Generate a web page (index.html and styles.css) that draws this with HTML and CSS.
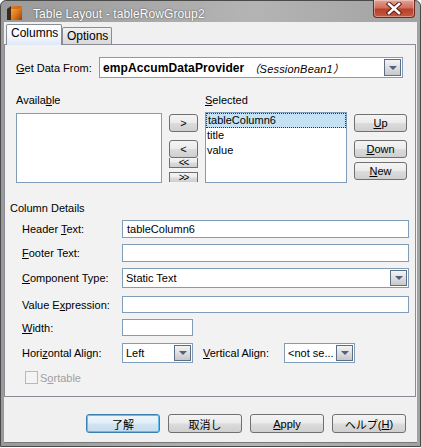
FILE: index.html
```html
<!DOCTYPE html>
<html>
<head>
<meta charset="utf-8">
<link rel="stylesheet" href="styles.css">
</head>
<body>
<div class="window">
  <div class="titlebar">
    <svg class="app-icon" width="16" height="16" viewBox="0 0 16 16">
      <defs>
        <linearGradient id="fr" x1="0" y1="0" x2="1" y2="1">
          <stop offset="0" stop-color="#f7b24a"/>
          <stop offset="0.5" stop-color="#e07a1c"/>
          <stop offset="1" stop-color="#9c3e08"/>
        </linearGradient>
      </defs>
      <polygon points="0,4 4,1 4,15 0,15" fill="#3a2a1c"/>
      <polygon points="4,1 15,1 15,15 4,15" fill="url(#fr)"/>
      <polygon points="4,1 15,1 12,4 4,4" fill="#c25a14" opacity="0.6"/>
    </svg>
    <span class="title">Table Layout - tableRowGroup2</span>
    <div class="close">
      <svg width="18" height="13" viewBox="0 0 18 13">
        <path d="M4 2 L14 11 M14 2 L4 11" stroke="#5a1a10" stroke-width="4.4" stroke-linecap="square"/>
        <path d="M4 2 L14 11 M14 2 L4 11" stroke="#ffffff" stroke-width="2.6" stroke-linecap="square"/>
      </svg>
    </div>
  </div>
  <div class="client">
    <div class="tabs">
      <div class="tab active">Columns</div>
      <div class="tab">Options</div>
    </div>
    <div class="panel">
      <div class="source-row">
        <span class="source-label"><u>G</u>et Data From:</span>
        <div class="combo source-combo">
          <div class="combo-text"><b class="provider">empAccumDataProvider</b><i class="bean">（SessionBean1）</i></div>
          <div class="drop"><span class="tri"></span></div>
        </div>
      </div>

      <div class="lists">
        <div class="cap">Availa<u>b</u>le</div>
        <div></div>
        <div class="cap"><u>S</u>elected</div>
        <div></div>
        <div class="listbox"></div>
        <div class="move-btns">
          <div class="btn btn-add">&gt;</div>
          <div class="btn btn-remove">&lt;</div>
          <div class="btn btn-small btn-remove-all">&lt;&lt;</div>
          <div class="btn btn-small btn-add-all">&gt;&gt;</div>
        </div>
        <div class="listbox selected-list">
          <div class="item sel">tableColumn6</div>
          <div class="item">title</div>
          <div class="item">value</div>
        </div>
        <div class="order-btns">
          <div class="btn btn-up"><u>U</u>p</div>
          <div class="btn btn-down"><u>D</u>own</div>
          <div class="btn btn-new"><u>N</u>ew</div>
        </div>
      </div>

      <div class="section-title">Column Details</div>

      <div class="form-row r-header">
        <span class="flabel">Header <u>T</u>ext:</span>
        <div class="input wide">tableColumn6</div>
      </div>
      <div class="form-row r-footer">
        <span class="flabel"><u>F</u>ooter Text:</span>
        <div class="input wide"></div>
      </div>
      <div class="form-row r-comp">
        <span class="flabel"><u>C</u>omponent Type:</span>
        <div class="combo comp-combo">
          <div class="combo-text">Static Text</div>
          <div class="drop"><span class="tri"></span></div>
        </div>
      </div>
      <div class="form-row r-value">
        <span class="flabel">Value E<u>x</u>pression:</span>
        <div class="input wide"></div>
      </div>
      <div class="form-row r-width">
        <span class="flabel"><u>W</u>idth:</span>
        <div class="input narrow"></div>
      </div>
      <div class="form-row r-align">
        <span class="flabel">Hori<u>z</u>ontal Align:</span>
        <div class="combo small-combo">
          <div class="combo-text">Left</div>
          <div class="drop"><span class="tri"></span></div>
        </div>
        <span class="vlabel"><u>V</u>ertical Align:</span>
        <div class="combo small-combo">
          <div class="combo-text">&lt;not se...</div>
          <div class="drop"><span class="tri"></span></div>
        </div>
      </div>
      <div class="form-row r-sort">
        <span class="checkbox"></span>
        <span class="sort-label">S<u>o</u>rtable</span>
      </div>
    </div>

    <div class="footer">
      <div class="btn dlg-btn default">了解</div>
      <div class="btn dlg-btn">取消し</div>
      <div class="btn dlg-btn"><u>A</u>pply</div>
      <div class="btn dlg-btn">ヘルプ(<u>H</u>)</div>
    </div>
  </div>
</div>
</body>
</html>
```

FILE: styles.css
```css
* { box-sizing: border-box; }

html, body {
  margin: 0;
  padding: 0;
  background: #ffffff;
}

body {
  font-family: "Liberation Sans", "Noto Sans CJK JP", sans-serif;
  font-size: 11px;
  color: #000;
}

u { text-decoration: underline; text-underline-offset: 1px; }

.window {
  width: 421px;
  height: 447px;
  border: 1px solid #4a4a4a;
  border-radius: 6px 6px 0 0;
  background: linear-gradient(to right, #9a9a9a, #b4b4b4 60%, #a2a2a2);
  padding: 0 3px 3px;
  display: flex;
  flex-direction: column;
  box-shadow: 0 1px 0 #3a9aa8;
}

.titlebar {
  height: 21px;
  display: flex;
  align-items: center;
  position: relative;
  flex-shrink: 0;
}

.app-icon {
  margin-left: 3px;
  margin-top: 3px;
}

.title {
  margin-left: 10px;
  margin-top: 4px;
  font-size: 12px;
  color: #ffffff;
  text-shadow: 0 0 2px #5a5a5a, 0 0 1px #6a6a6a;
  letter-spacing: 0.1px;
}

.close {
  position: absolute;
  right: 2px;
  top: -1px;
  width: 42px;
  height: 18px;
  border: 1px solid #6e2a20;
  border-top: none;
  border-radius: 0 0 4px 4px;
  background: linear-gradient(to bottom, #e3a294 0%, #d0705e 45%, #b8402c 55%, #c65a3e 100%);
  display: flex;
  align-items: center;
  justify-content: center;
  box-shadow: inset 0 0 0 1px rgba(255,255,255,0.35);
}

.client {
  flex: 1;
  background: #f0f0f0;
  display: flex;
  flex-direction: column;
  border-bottom: 1px solid #7a7a7a;
}

.tabs {
  display: flex;
  align-items: flex-end;
  height: 22px;
  padding-left: 2px;
  flex-shrink: 0;
}

.tab {
  height: 17px;
  padding: 0 4px;
  border: 1px solid #898c95;
  border-bottom: none;
  border-radius: 2px 2px 0 0;
  background: linear-gradient(to bottom, #f2f2f2, #e4e4e4 50%, #d8d8d8);
  font-size: 12px;
  line-height: 16px;
  margin-left: 1px;
  color: #000;
}

.tab.active {
  width: 56px;
  margin-left: 0;
  margin-right: -1px;
  padding: 0 4px;
  background: linear-gradient(to bottom, #ffffff, #f4f7fc 60%, #dee8f6);
  position: relative;
  z-index: 2;
  line-height: 17px;
  margin-bottom: -1px;
  height: 21px;
}

.tab:not(.active) {
  width: 50px;
}

.panel {
  height: 353px;
  margin-right: 1px;
  border: 1px solid #898c95;
  background: #f2f2f2;
  display: flex;
  flex-direction: column;
  flex-shrink: 0;
}

/* source row */
.source-row {
  display: flex;
  align-items: center;
  margin-top: 12px;
  margin-left: 11px;
  height: 21px;
}

.source-label {
  width: 83px;
  font-size: 11px;
}

.combo {
  display: flex;
  align-items: stretch;
  border: 1px solid #7f9db9;
  background: #fff;
}

.combo-text {
  flex: 1;
  padding-left: 3px;
  display: flex;
  align-items: center;
  white-space: nowrap;
  overflow: hidden;
}

.source-combo {
  width: 304px;
  height: 21px;
}

.provider {
  font-size: 12px;
  font-weight: bold;
  letter-spacing: 0.1px;
}

.bean {
  font-size: 11px;
  margin-left: 4px;
  letter-spacing: 0.2px;
}

.drop {
  width: 17px;
  margin: 1px;
  border: 1px solid #5e6e86;
  background: linear-gradient(to bottom, #f4f4f4, #dcdcdc 55%, #c8c8c8);
  display: flex;
  align-items: center;
  justify-content: center;
}

.tri {
  width: 0;
  height: 0;
  border-left: 4px solid transparent;
  border-right: 4px solid transparent;
  border-top: 4px solid #4d6185;
}

/* lists */
.lists {
  display: grid;
  grid-template-columns: 146px 29px 142px 53px;
  grid-template-rows: 14px 70px;
  column-gap: 7px;
  row-gap: 6px;
  margin-top: 15px;
  margin-left: 11px;
}

.cap {
  font-size: 11px;
  line-height: 14px;
}

.listbox {
  border: 1px solid #7f9db9;
  background: #fff;
}

.selected-list {
  margin-top: -1px;
}

.item {
  height: 15px;
  line-height: 14px;
  padding-left: 1px;
  font-size: 11px;
}

.item.sel {
  background: #c4e2f4;
  border: 1px dotted #333;
  line-height: 12px;
}

.btn {
  display: flex;
  align-items: center;
  justify-content: center;
  border: 1px solid #707070;
  border-radius: 3px;
  background: linear-gradient(to bottom, #f4f4f4, #ebebeb 48%, #dcdcdc 52%, #cfcfcf);
  font-size: 11px;
  color: #000;
}

.move-btns, .order-btns {
  display: flex;
  flex-direction: column;
}

.btn-add { margin-top: 1px; height: 18px; }
.btn-remove { margin-top: 8px; height: 18px; }
.btn-small {
  height: 10px;
  border-radius: 0;
  line-height: 10px;
  font-size: 10px;
  letter-spacing: -1px;
}
.btn-remove-all {
  margin-top: 0;
  border-top: none;
}
.btn-add-all {
  margin-top: 4px;
  border-bottom: none;
}

.btn-up { margin-top: 1px; height: 18px; }
.btn-down { margin-top: 8px; height: 18px; }
.btn-new { margin-top: 4px; height: 18px; }

/* column details */
.section-title {
  margin-top: 19px;
  margin-left: 5px;
  line-height: 13px;
  height: 13px;
}

.form-row {
  display: flex;
  align-items: center;
  margin-left: 17px;
}

.flabel {
  width: 100px;
}

.input {
  border: 1px solid #7f9db9;
  background: #fff;
  height: 18px;
  padding-left: 4px;
  display: flex;
  align-items: center;
}

.wide { width: 287px; }
.narrow { width: 71px; }

.r-header { margin-top: 5px; height: 18px; }
.r-footer { margin-top: 6px; height: 18px; }
.r-comp { margin-top: 6px; height: 20px; }
.r-value { margin-top: 8px; height: 17px; }
.r-value .input { height: 17px; }
.r-width { margin-top: 6px; height: 17px; }
.r-width .input { height: 17px; }
.r-align { margin-top: 7px; height: 20px; }
.r-sort { margin-top: 8px; height: 13px; margin-left: 20px; }

.comp-combo {
  width: 287px;
  height: 20px;
}

.small-combo {
  width: 71px;
  height: 20px;
}

.vlabel {
  margin-left: 10px;
  width: 81px;
}

.checkbox {
  width: 13px;
  height: 13px;
  border: 1px solid #b8b8b8;
  background: #f4f4f4;
}

.sort-label {
  margin-left: 2px;
  color: #a0a0a0;
}

/* footer */
.footer {
  display: flex;
  justify-content: flex-end;
  gap: 8px;
  margin-top: 17px;
  padding-right: 11px;
}

.dlg-btn {
  width: 74px;
  height: 19px;
  font-size: 11px;
  border-color: #707070;
}

.dlg-btn.default {
  border-color: #3c7fb1;
  box-shadow: inset 0 0 0 1px #62c0e8;
  background: linear-gradient(to bottom, #eef6fb, #e2eef8 48%, #d2e4f2 52%, #c4dcee);
}
```
